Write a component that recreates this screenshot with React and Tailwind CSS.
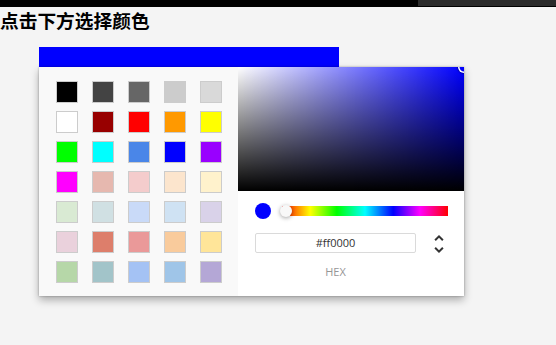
import React from 'react';

const swatches = [
  ['#000000', '#434343', '#666666', '#cccccc', '#d9d9d9'],
  ['#ffffff', '#980000', '#ff0000', '#ff9900', '#ffff00'],
  ['#00ff00', '#00ffff', '#4a86e8', '#0000ff', '#9900ff'],
  ['#ff00ff', '#e6b8af', '#f4cccc', '#fce5cd', '#fff2cc'],
  ['#d9ead3', '#d0e0e3', '#c9daf8', '#cfe2f3', '#d9d2e9'],
  ['#ead1dc', '#dd7e6b', '#ea9999', '#f9cb9c', '#ffe599'],
  ['#b6d7a8', '#a2c4c9', '#a4c2f4', '#9fc5e8', '#b4a7d6'],
];

const App = () => {
  return (
    <div className="min-h-[345px] w-full bg-[#f4f4f4] font-['Open_Sans','Noto_Sans_CJK_SC',sans-serif]">
      <div className="flex h-[7px] bg-black">
        <div className="ml-auto h-[6px] w-[138px] bg-[#2b2b2b]" />
      </div>

      <h3 className="text-[18.72px] font-bold leading-[26px] text-black font-['Noto_Sans_CJK_SC',sans-serif]">
        点击下方选择颜色
      </h3>

      <div className="ml-[39px] mt-[14px] h-[20px] w-[300px] bg-[#0000ff]" />

      <div className="ml-[39px] flex w-[425px] shadow-[0_0_2px_rgba(0,0,0,0.3),0_4px_8px_rgba(0,0,0,0.3)]">
        <div className="w-[199px] bg-[#f9f9f9] pb-[13px] pl-[17px] pt-[14px]">
          <div className="grid grid-cols-[repeat(5,22px)] gap-x-[14px] gap-y-[8px]">
            {swatches.flat().map((color, index) => (
              <div
                key={index}
                className="h-[22px] w-[22px] border border-[#cccccc]"
                style={{ backgroundColor: color }}
              />
            ))}
          </div>
        </div>

        <div className="w-[226px] bg-white">
          <div className="relative h-[124px] overflow-hidden bg-[#0000ff]">
            <div className="absolute inset-0 bg-[image:linear-gradient(to_right,#fff,rgba(255,255,255,0))]" />
            <div className="absolute inset-0 bg-[image:linear-gradient(to_top,#000,rgba(0,0,0,0))]" />
            <div className="absolute -right-[6px] -top-[6px] h-[12px] w-[12px] rounded-full shadow-[inset_0_0_0_1.5px_#fff,0_0_1px_1px_rgba(0,0,0,0.3)]" />
          </div>

          <div className="pl-[17px] pr-[16px] pt-[12px]">
            <div className="flex items-center">
              <div className="h-[16px] w-[16px] rounded-full bg-[#0000ff]" />
              <div className="relative ml-[11px] h-[10px] flex-1 bg-[image:linear-gradient(to_right,#f00_0%,#ff0_17%,#0f0_33%,#0ff_50%,#00f_67%,#f0f_83%,#f00_100%)]">
                <div className="absolute -left-[2px] -top-[1px] h-[12px] w-[12px] rounded-full bg-[#f8f8f8] shadow-[0_1px_4px_0_rgba(0,0,0,0.37)]" />
              </div>
            </div>

            <div className="mt-[14px] flex items-start">
              <div className="w-[161px] shrink-0">
                <div className="flex h-[20px] items-center justify-center rounded-[2px] border border-[#dadada] text-[11px] text-[#333333]">
                  #ff0000
                </div>
                <div className="mt-[12px] text-center text-[11px] leading-[14px] text-[#969696]">HEX</div>
              </div>
              <svg viewBox="0 0 24 24" className="ml-[11px] -mt-[1px] h-[24px] w-[24px] shrink-0">
                <path
                  fill="#333"
                  d="M12,18.17L8.83,15L7.42,16.41L12,21L16.59,16.41L15.17,15M12,5.83L15.17,9L16.58,7.59L12,3L7.41,7.59L8.83,9L12,5.83Z"
                />
              </svg>
            </div>
          </div>
        </div>
      </div>
    </div>
  );
};

export default App;
